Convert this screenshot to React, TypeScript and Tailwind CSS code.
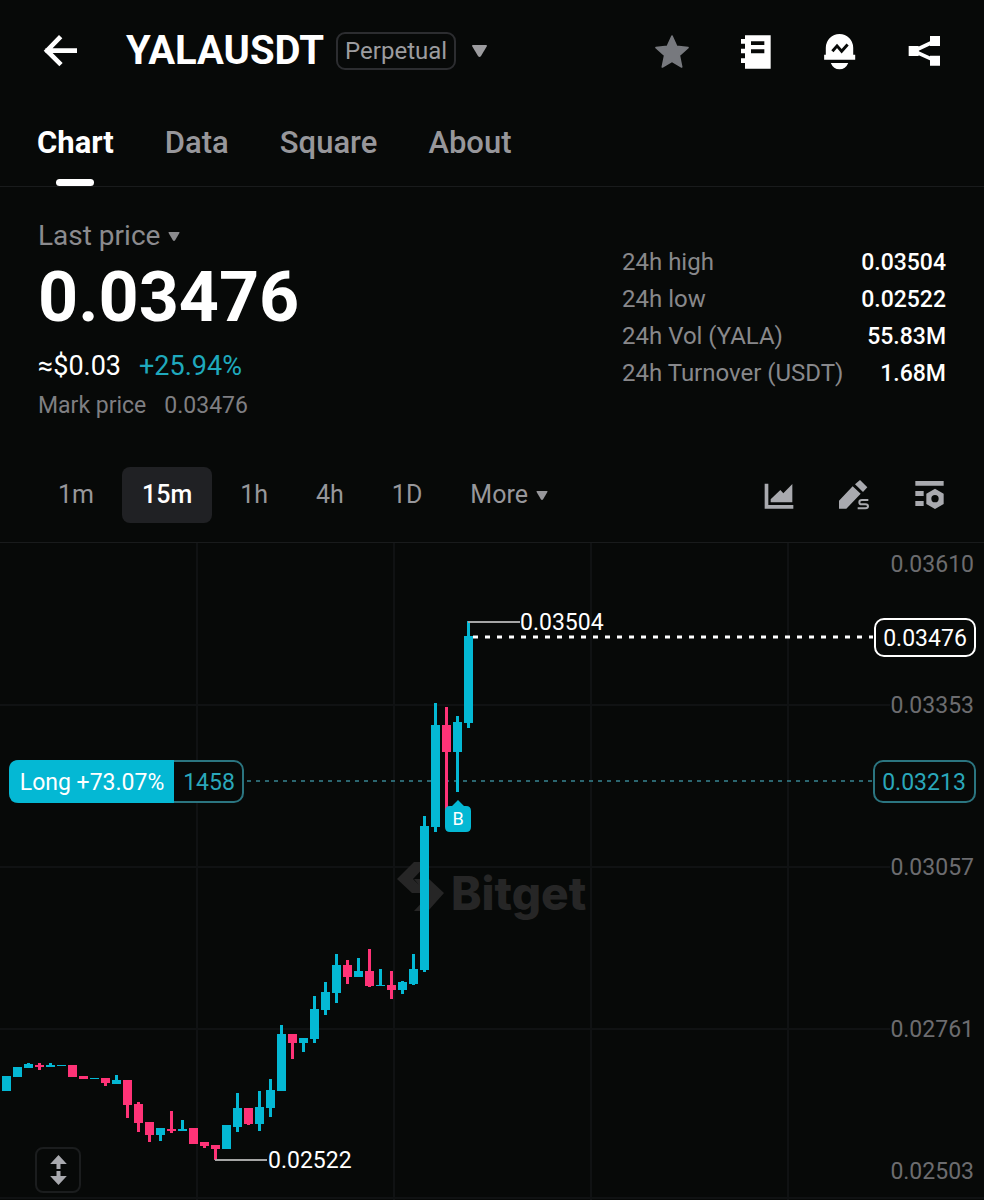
import { useState } from 'react';
import type { ReactNode } from 'react';

interface Candle {
  high: number;
  top: number;
  bottom: number;
  low: number;
  up: boolean;
}

const UP = '#04b8d4';
const DOWN = '#ff3377';
const CANDLE_STEP = 11;

const c = (high: number, top: number, bottom: number, low: number, up: boolean): Candle => ({ high, top, bottom, low, up });

// y values in chart units, oldest candle first
const candles: Candle[] = [
  c(537, 537, 548, 548, false),
  c(533, 533, 548, 548, true),
  c(524, 524, 534, 534, true),
  c(520, 521, 525, 525, true),
  c(520, 522, 524, 527, false),
  c(520, 522, 524, 524, true),
  c(522, 522, 523, 523, true),
  c(522, 522, 534, 534, false),
  c(533, 533, 536, 536, false),
  c(535, 535, 536, 536, true),
  c(535, 535, 540, 543, false),
  c(532, 537, 541, 541, true),
  c(537, 537, 562, 575, false),
  c(559, 561, 580, 589, false),
  c(579, 579, 592, 599, false),
  c(585, 585, 592, 598, true),
  c(568, 586, 588, 590, false),
  c(577, 586, 588, 588, true),
  c(585, 585, 601, 601, false),
  c(599, 599, 603, 605, false),
  c(602, 602, 606, 617, false),
  c(582, 582, 606, 606, true),
  c(550, 565, 584, 589, true),
  c(565, 565, 581, 582, false),
  c(548, 564, 581, 588, true),
  c(536, 547, 565, 574, true),
  c(482, 491, 548, 548, true),
  c(491, 491, 500, 516, false),
  c(495, 495, 500, 509, true),
  c(453, 466, 496, 500, true),
  c(439, 449, 467, 472, true),
  c(411, 422, 450, 460, true),
  c(417, 422, 434, 441, false),
  c(415, 428, 434, 434, true),
  c(406, 428, 443, 444, false),
  c(426, 442, 443, 443, true),
  c(428, 442, 447, 456, false),
  c(438, 439, 447, 451, true),
  c(411, 426, 441, 442, true),
  c(273, 283, 427, 429, true),
  c(160, 182, 284, 289, true),
  c(164, 182, 209, 275, false),
  c(173, 179, 209, 249, true),
  c(78, 93, 180, 185, true),
];

const priceAxis = [
  { label: '0.03610', y: 29 },
  { label: '0.03353', y: 170 },
  { label: '0.03057', y: 332 },
  { label: '0.02761', y: 494 },
  { label: '0.02503', y: 636 },
];

const tabs = ['Chart', 'Data', 'Square', 'About'];
const intervals = ['1m', '15m', '1h', '4h', '1D'];

const stats = [
  { label: '24h high', value: '0.03504' },
  { label: '24h low', value: '0.02522' },
  { label: '24h Vol (YALA)', value: '55.83M' },
  { label: '24h Turnover (USDT)', value: '1.68M' },
];

function Caret({ className }: { className: string }) {
  return (
    <svg viewBox="0 0 15 12" className={className} fill="currentColor" aria-hidden="true">
      <path d="M1 0h13q1.500 0 .7 1.400L9 11q-1.500 1.800-3 0L.3 1.400Q-.5 0 1 0z" />
    </svg>
  );
}

function IconButton({ label, className = '', children }: { label: string; className?: string; children: ReactNode }) {
  return (
    <button type="button" aria-label={label} className={`shrink-0 ${className}`}>
      {children}
    </button>
  );
}

function Header() {
  return (
    <header className="flex items-center justify-between pt-6 pl-[42px] pr-[42px]">
      <div className="flex h-[54px] items-center">
        <IconButton label="Back">
          <svg viewBox="0 0 108 108" className="size-9" fill="none" stroke="currentColor" strokeWidth="14">
            <path d="M10 53h95M56 11L15 53l42 42" />
          </svg>
        </IconButton>
        <h1 className="ml-12 text-[40px] leading-[56px] font-bold">YALAUSDT</h1>
        <button type="button" className="ml-3 flex items-center gap-4 text-[#9c9c9f]">
          <span className="rounded-[9px] border-2 border-[#2c2d30] px-[7px] text-2xl leading-[34px]">Perpetual</span>
          <Caret className="h-3 w-[15px]" />
        </button>
      </div>
      <div className="flex items-center gap-12">
        <IconButton label="Favorite" className="text-[#77797e]">
          <svg viewBox="0 0 108 108" className="size-9" fill="currentColor" stroke="currentColor" strokeWidth="5" strokeLinejoin="round">
            <path d="M54 9l14 31 34 4-26 23 7 35-29-17-29 17 7-35L6 44l34-4z" />
          </svg>
        </IconButton>
        <IconButton label="Trading guide">
          <svg viewBox="0 0 108 108" className="size-9" fill="currentColor">
            <path
              fillRule="evenodd"
              d="M21 7h77v100H21V90H9V76h12V61H9V47h12V32H9V18h12zM39 25v11h40V25zM39 49v12h40V49z"
            />
          </svg>
        </IconButton>
        <IconButton label="Price alert">
          <svg viewBox="0 0 108 112" className="h-[37px] w-9" fill="currentColor">
            <path d="M11 66V45a41.500 42 0 0 1 83 0v21h6v15H6V66z" />
            <path d="M26 91h53q-8 19-26.500 19T26 91z" />
            <path d="M31 55l14-16 14 16 18-20" fill="none" stroke="#070908" strokeWidth="9" />
          </svg>
        </IconButton>
        <IconButton label="Share">
          <svg viewBox="0 0 108 108" className="size-9" fill="currentColor">
            <path d="M87 24L23 54l64 29" fill="none" stroke="currentColor" strokeWidth="11" />
            <path d="M8 39h30v30H8zM72 9h30v30H72zM72 68h30v30H72z" />
          </svg>
        </IconButton>
      </div>
    </header>
  );
}

function Tabs() {
  const [active, setActive] = useState('Chart');

  return (
    <nav className="flex h-[109px] gap-[51px] border-b border-[#191b1c] px-[37px]">
      {tabs.map((tab) => (
        <button
          key={tab}
          type="button"
          onClick={() => setActive(tab)}
          className={`relative pt-[22px] text-[31px] ${active === tab ? 'font-bold text-white' : 'font-medium text-[#97979b]'}`}
        >
          {tab}
          {active === tab && (
            <span className="absolute bottom-0 left-1/2 h-[7px] w-[38px] -translate-x-1/2 rounded-sm bg-white" />
          )}
        </button>
      ))}
    </nav>
  );
}

function PriceSummary() {
  return (
    <section className="flex justify-between px-[38px] pt-8">
      <div>
        <button type="button" className="flex items-center gap-2 text-[28px] leading-[34px] text-[#8b8b8e]">
          Last price
          <Caret className="h-[9px] w-3" />
        </button>
        <p className="text-[70px] leading-[88px] font-bold">0.03476</p>
        <p className="flex gap-[18px] text-[27px] leading-[50px]">
          <span>≈$0.03</span>
          <span className="text-[#1fa9bd]">+25.94%</span>
        </p>
        <p className="flex gap-[18px] text-[23px] leading-[30px] text-[#7f7f82]">
          <span>Mark price</span>
          <span>0.03476</span>
        </p>
      </div>
      <dl className="w-[324px] pt-[25px]">
        {stats.map((s) => (
          <div key={s.label} className="flex justify-between leading-[37px]">
            <dt className="text-2xl leading-[37px] text-[#88888b]">{s.label}</dt>
            <dd className="text-[23px] font-medium">{s.value}</dd>
          </div>
        ))}
      </dl>
    </section>
  );
}

function IntervalBar() {
  const [active, setActive] = useState('15m');

  return (
    <div className="mt-[46px] flex items-center justify-between border-b border-[#191b1c] pr-10 pb-[19px] pl-[38px] text-[#97979b]">
      <div className="flex gap-2 text-[25px] leading-14">
        {intervals.map((interval) => (
          <button
            key={interval}
            type="button"
            onClick={() => setActive(interval)}
            className={`rounded-lg px-5 ${active === interval ? 'bg-[#202124] font-medium text-white' : ''}`}
          >
            {interval}
          </button>
        ))}
        <button type="button" className="flex items-center gap-2 px-5">
          More
          <Caret className="h-[9px] w-3" />
        </button>
      </div>
      <div className="flex gap-[45px] text-[#a9aaaf]">
        <IconButton label="Indicators">
          <svg viewBox="0 0 90 90" className="size-[30px]" fill="currentColor">
            <path d="M2 11h11v64h75v11H2z" />
            <path d="M20 67V58l29-28 9 10 27-28v55z" />
          </svg>
        </IconButton>
        <IconButton label="Drawing tools">
          <svg viewBox="0 0 90 90" className="size-[30px]" fill="currentColor">
            <path d="M0 86V62l41-43 24 22-43 45zM48 13L63 0l22 22-13 14z" />
            <path d="M88 60H69q-8 0-8 6.500t8 6.500h10q8 0 8 6t-8 6H56" fill="none" stroke="currentColor" strokeWidth="6" />
          </svg>
        </IconButton>
        <IconButton label="Chart settings">
          <svg viewBox="0 0 90 90" className="size-[30px]" fill="currentColor">
            <path d="M4 3h85v14H4zM4 33h25v15H4zM4 63h25v15H4z" />
            <path fillRule="evenodd" d="M63 26l26 15v31L63 87 37 72V41zM63 45a11 11 0 1 0 0 22 11 11 0 0 0 0-22z" />
          </svg>
        </IconButton>
      </div>
    </div>
  );
}

function CandleChart() {
  return (
    <section className="relative">
      <svg viewBox="0 0 984 657" className="block w-full" fontSize="23" role="img" aria-label="YALAUSDT 15m candles">
        {/* grid */}
        <path
          d="M197 0v657M394 0v657M591 0v657M788 0v657M0 162h890M0 324h890M0 486h890M0 655h984"
          fill="none"
          stroke="#101213"
          strokeWidth="2"
        />

        {/* watermark */}
        <g fill="#262626">
          <path d="M397 336l17-17h15l-16 17 14 14h-15zM414 368l14-15-14-17h15l15 14-16 18z" />
          <text x="451" y="367" fontSize="46" fontWeight="800" fontFamily="Inter, sans-serif">
            Bitget
          </text>
        </g>

        {/* entry price line */}
        <path d="M247 238H872" stroke="#2b6670" strokeWidth="2" strokeDasharray="4 5" />

        {candles.map((k, i) => {
          const x = (i - 1) * CANDLE_STEP + 6;
          return (
            <g key={i} fill={k.up ? UP : DOWN}>
              <rect x={x - 1} y={k.high} width="3" height={k.low - k.high} />
              <rect x={x - 4} y={k.top} width="9" height={k.bottom - k.top} />
            </g>
          );
        })}

        {/* high and low markers */}
        <path d="M468 79h52M215 617h52" stroke="#a5a5a5" strokeWidth="2" />
        <text x="520" y="87" fill="#fff">0.03504</text>
        <text x="268" y="625" fill="#fff">0.02522</text>

        {/* last price line */}
        <path d="M473 94h400" stroke="#fff" strokeWidth="3" strokeDasharray="5 7" />

        <g fill="#6c6c6f" textAnchor="end">
          {priceAxis.map((p) => (
            <text key={p.label} x="974" y={p.y}>
              {p.label}
            </text>
          ))}
        </g>

        <rect x="875" y="76" width="100" height="37" rx="9" fill="#070908" stroke="#fff" strokeWidth="2" />
        <text x="925" y="103" textAnchor="middle" fill="#fff">0.03476</text>
        <rect x="874" y="218" width="101" height="41" rx="9" fill="#070908" stroke="#2b7580" strokeWidth="2" />
        <text x="924" y="247" textAnchor="middle" fill="#2aa7ba">0.03213</text>

        {/* open position */}
        <rect x="10" y="218" width="233" height="41" rx="9" fill="#070908" stroke="#2b7580" strokeWidth="2" />
        <path d="M174 217v43H19q-10 0-10-10v-23q0-10 10-10z" fill={UP} />
        <text x="92" y="247" textAnchor="middle" fill="#fff">Long +73.07%</text>
        <text x="209" y="247" textAnchor="middle" fill="#2aa7ba">1458</text>

        {/* buy marker */}
        <path d="M458 257l6 6h2q5 0 5 5v16q0 5-5 5h-16q-5 0-5-5v-16q0-5 5-5h2z" fill={UP} />
        <text x="458" y="282" textAnchor="middle" fill="#fff" fontSize="18">B</text>
      </svg>

      <button
        type="button"
        aria-label="Resize chart"
        className="absolute bottom-[7px] left-[35px] flex size-[46px] items-center justify-center rounded-lg border-2 border-[#1b1d1e] bg-[#070908] text-[#a9aaaf]"
      >
        <svg viewBox="0 0 50 90" className="h-[30px] w-[17px]" fill="currentColor">
          <path d="M25 0l25 27H31v15H19V27H0zM25 90L0 63h19V48h12v15h19z" />
        </svg>
      </button>
    </section>
  );
}

export default function App() {
  return (
    <main className="min-h-screen bg-[#070908] font-[Roboto,sans-serif] text-white">
      <Header />
      <Tabs />
      <PriceSummary />
      <IntervalBar />
      <CandleChart />
    </main>
  );
}
